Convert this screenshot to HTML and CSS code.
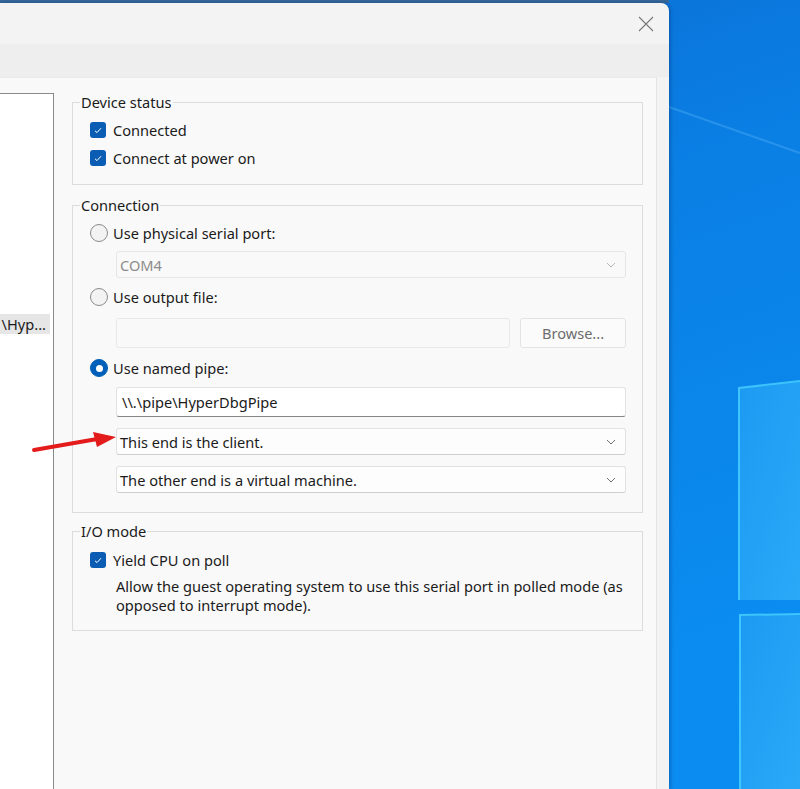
FILE: index.html
```html
<!DOCTYPE html>
<html>
<head>
<meta charset="utf-8">
<link rel="stylesheet" href="styles.css">
</head>
<body>
<div class="desktop">
  <svg class="wallpaper" width="800" height="789" viewBox="0 0 800 789">
    <defs>
      <linearGradient id="bg" x1="0" y1="0" x2="0.35" y2="1">
        <stop offset="0" stop-color="#0b68d0"/>
        <stop offset="0.45" stop-color="#0a7fe4"/>
        <stop offset="1" stop-color="#0b8cf0"/>
      </linearGradient>
      <linearGradient id="pane" x1="0" y1="0" x2="1" y2="1">
        <stop offset="0" stop-color="#1c9af2"/>
        <stop offset="1" stop-color="#2aa9f8"/>
      </linearGradient>
    </defs>
    <rect width="800" height="789" fill="url(#bg)"/>
    <rect x="0" y="0" width="669" height="3" fill="#35699d"/>
    <line x1="669" y1="107" x2="800" y2="153" stroke="#3fa4f2" stroke-width="2" opacity="0.55"/>
    <polygon points="738,388 800,381 800,600 738,600" fill="url(#pane)"/>
    <polyline points="739,600 739,388 800,381" fill="none" stroke="#46cfff" stroke-width="2" opacity="0.8"/>
    <polygon points="739,614 800,614 800,789 739,789" fill="url(#pane)"/>
    <polyline points="740,789 740,615 800,614" fill="none" stroke="#46cfff" stroke-width="2" opacity="0.8"/>
  </svg>

  <div class="dialog">
    <div class="titlebar">
      <svg class="close" width="16" height="16" viewBox="0 0 16 16">
        <path d="M1 1 L15 15 M15 1 L1 15" stroke="#777" stroke-width="1.1" fill="none"/>
      </svg>
    </div>
    <div class="tabband"></div>
    <div class="main">
      <div class="listbox">
        <div class="list-item">\Hyp...</div>
      </div>
      <div class="settings">
        <fieldset class="group g-status">
          <legend>Device status</legend>
          <div class="row">
            <span class="checkbox"><svg width="8" height="7" viewBox="0 0 8 7"><path d="M1 3.8 L3 5.6 L7 1.2" stroke="#fff" stroke-width="1" fill="none"/></svg></span>
            <span>Connected</span>
          </div>
          <div class="row">
            <span class="checkbox"><svg width="8" height="7" viewBox="0 0 8 7"><path d="M1 3.8 L3 5.6 L7 1.2" stroke="#fff" stroke-width="1" fill="none"/></svg></span>
            <span>Connect at power on</span>
          </div>
        </fieldset>

        <fieldset class="group g-conn">
          <legend>Connection</legend>
          <div class="row">
            <span class="radio"></span>
            <span>Use physical serial port:</span>
          </div>
          <div class="combo disabled c-com">
            <span>COM4</span>
            <svg class="chev" width="10" height="6" viewBox="0 0 10 6"><path d="M1 1 L5 5 L9 1" stroke="#b5b5b5" stroke-width="1" fill="none"/></svg>
          </div>
          <div class="row r-file">
            <span class="radio"></span>
            <span>Use output file:</span>
          </div>
          <div class="file-row">
            <div class="textbox disabled"></div>
            <div class="button">Browse...</div>
          </div>
          <div class="row r-pipe">
            <span class="radio on"><span class="dot"></span></span>
            <span>Use named pipe:</span>
          </div>
          <div class="textbox pipe">\\.\pipe\HyperDbgPipe</div>
          <div class="combo c-end">
            <span>This end is the client.</span>
            <svg class="chev" width="10" height="6" viewBox="0 0 10 6"><path d="M1 1 L5 5 L9 1" stroke="#6f6f6f" stroke-width="1" fill="none"/></svg>
          </div>
          <div class="combo c-other">
            <span>The other end is a virtual machine.</span>
            <svg class="chev" width="10" height="6" viewBox="0 0 10 6"><path d="M1 1 L5 5 L9 1" stroke="#6f6f6f" stroke-width="1" fill="none"/></svg>
          </div>
        </fieldset>

        <fieldset class="group g-io">
          <legend>I/O mode</legend>
          <div class="row">
            <span class="checkbox"><svg width="8" height="7" viewBox="0 0 8 7"><path d="M1 3.8 L3 5.6 L7 1.2" stroke="#fff" stroke-width="1" fill="none"/></svg></span>
            <span>Yield CPU on poll</span>
          </div>
          <p class="desc">Allow the guest operating system to use this serial port in polled mode (as opposed to interrupt mode).</p>
        </fieldset>
      </div>
    </div>
  </div>

  <svg class="arrow" width="130" height="40" viewBox="0 0 130 40">
    <line x1="34" y1="20" x2="100" y2="8.5" stroke="#e31b1b" stroke-width="4" stroke-linecap="round"/>
    <polygon points="93,2 97,17 116,7" fill="#e31b1b"/>
  </svg>
</div>
</body>
</html>
```

FILE: styles.css
```css
* { box-sizing: border-box; }
html, body { margin: 0; padding: 0; }
body {
  width: 800px;
  height: 789px;
  overflow: hidden;
  font-family: "Noto Sans", "Open Sans", sans-serif;
  font-size: 14.6px;
  color: #1b1b1b;
}
.desktop {
  position: relative;
  width: 800px;
  height: 789px;
  padding-top: 3px;
  background: #0b78de;
}
.wallpaper { position: absolute; left: 0; top: 0; }

.dialog {
  position: relative;
  width: 669px;
  height: 786px;
  background: #f3f3f3;
  border-top-right-radius: 8px;
  display: flex;
  flex-direction: column;
  box-shadow: 1px 0 4px rgba(0, 0, 40, 0.3);
}
.titlebar {
  height: 41px;
  display: flex;
  justify-content: flex-end;
  align-items: center;
  padding-right: 15px;
}
.close { display: block; }
.tabband { height: 33px; background: #eeeeee; }

.main {
  flex: 1;
  display: flex;
  margin-right: 12px;
  background: #f9f9f9;
  border-top: 1px solid #e9e9e9;
  border-right: 1px solid #e4e4e4;
}
.listbox {
  width: 54px;
  margin-top: 15px;
  background: #ffffff;
  border-top: 1px solid #8a8a8a;
  border-right: 1px solid #8a8a8a;
  padding-top: 220px;
  overflow: hidden;
}
.list-item {
  width: 50px;
  height: 20px;
  line-height: 20px;
  background: #e6e6e6;
  text-align: right;
  padding-right: 4px;
  white-space: nowrap;
  overflow: hidden;
  color: #1b1b1b;
}
.settings {
  flex: 1;
  padding: 15px 13px 0 18px;
}

.group {
  margin: 0;
  min-width: 0;
  border: 1px solid #dcdcdc;
  padding: 5px 16px 12px 17px;
}
.group legend {
  margin-left: -10px;
  padding: 0 1px;
  height: 18px;
  line-height: 18px;
}
.g-conn { margin-top: 11px; padding-bottom: 19px; }
.g-io { margin-top: 9px; padding-top: 6px; padding-bottom: 15px; }

.row {
  height: 28px;
  display: flex;
  align-items: center;
}
.checkbox {
  width: 16px;
  height: 16px;
  border-radius: 3px;
  background: #0a5db3;
  margin-right: 7px;
  display: flex;
  align-items: center;
  justify-content: center;
}
.checkbox svg { display: block; }
.radio {
  width: 18px;
  height: 18px;
  border-radius: 50%;
  border: 1px solid #8a8a8a;
  background: #f3f3f3;
  margin-right: 5px;
  display: flex;
  align-items: center;
  justify-content: center;
}
.radio.on { background: #005fb8; border-color: #005fb8; }
.radio .dot { width: 7px; height: 7px; border-radius: 50%; background: #ffffff; }

.combo {
  margin-left: 26px;
  height: 27px;
  border: 1px solid #e2e2e2;
  border-bottom-color: #cfcfcf;
  border-radius: 3px;
  background: #fdfdfd;
  display: flex;
  align-items: center;
  justify-content: space-between;
  padding: 0 9px 0 3px;
}
.combo.disabled {
  background: #f9f9f9;
  border-color: #e6e6e6;
  color: #8c8c8c;
}
.chev { display: block; }
.c-com { margin-top: 4px; }
.r-file { margin-top: 5px; }
.file-row {
  margin: 7px 0 0 26px;
  display: flex;
  gap: 10px;
}
.textbox {
  height: 30px;
  border: 1px solid #e2e2e2;
  border-radius: 3px;
  background: #ffffff;
}
.file-row .textbox { flex: 1; }
.textbox.disabled { background: #f9f9f9; border-color: #e8e8e8; }
.button {
  width: 106px;
  height: 30px;
  border: 1px solid #e3e3e3;
  border-radius: 3px;
  background: #fbfbfb;
  color: #6c6c6c;
  display: flex;
  align-items: center;
  justify-content: center;
}
.r-pipe { margin-top: 6px; }
.textbox.pipe {
  margin: 5px 0 0 26px;
  border-bottom: 1px solid #868686;
  padding: 0 5px;
  line-height: 28px;
}
.c-end { margin-top: 11px; }
.c-other { margin-top: 11px; }

.desc {
  margin: 3px 0 0 0;
  padding-left: 26px;
  line-height: 19px;
}

.arrow { position: absolute; left: 0; top: 430px; }
```
